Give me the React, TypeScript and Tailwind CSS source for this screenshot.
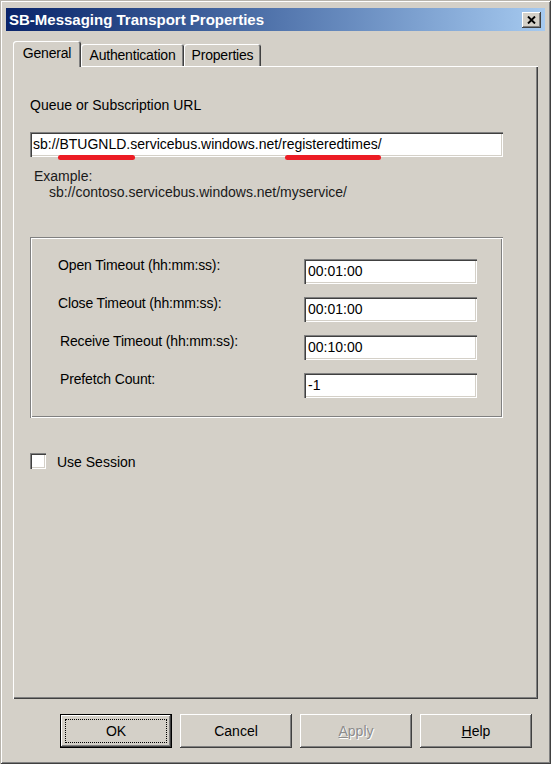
import React from "react";

const font = "font-['Liberation_Sans',Arial,sans-serif]";
const sunken =
  "bg-white shadow-[inset_1px_1px_0_#808080,inset_2px_2px_0_#404040,inset_-1px_-1px_0_#ffffff,inset_-2px_-2px_0_#d4d0c8]";
const raised =
  "bg-[#d4d0c8] shadow-[inset_-1px_-1px_0_#404040,inset_1px_1px_0_#ffffff,inset_-2px_-2px_0_#808080]";

function Field({ value, className = "" }: { value: string; className?: string }) {
  return (
    <div className={`${sunken} h-[25px] flex items-center pl-[4px] text-[14px] text-black ${className}`}>
      {value}
    </div>
  );
}

function Tab({ label, selected, w }: { label: string; selected?: boolean; w: string }) {
  return (
    <div
      className={
        selected
          ? `relative z-10 -mb-px h-[26px] ${w} flex justify-center pt-[4px] rounded-t-[3px] bg-[#d4d0c8] shadow-[inset_1px_1px_0_#ffffff,inset_-1px_0_0_#404040,inset_-2px_0_0_#808080] text-[14px] leading-[16px]`
          : `h-[22px] ${w} flex justify-center pt-[3px] rounded-t-[3px] bg-[#d4d0c8] shadow-[inset_1px_1px_0_#ffffff,inset_-1px_0_0_#404040,inset_-2px_0_0_#808080] text-[14px] leading-[16px]`
      }
    >
      <span className="text-black tracking-[-0.2px]">{label}</span>
    </div>
  );
}

function Row({ label, value, shift }: { label: string; value: string; shift?: boolean }) {
  return (
    <div className="flex h-[25px] items-start">
      <div
        className={`w-[246px] mt-[-2px] text-[14px] leading-[16px] tracking-[-0.15px] text-black ${shift ? "pl-[2px]" : ""}`}
      >
        {label}
      </div>
      <Field value={value} className="w-[173px]" />
    </div>
  );
}

export default function App() {
  return (
    <div className={`${font} w-[554px] h-[767px] bg-white`}>
      <div className="w-[551px] h-[764px] bg-[#d4d0c8] shadow-[inset_1px_1px_0_#b8b4ac,inset_-1px_-1px_0_#404040,inset_2px_2px_0_#ffffff,inset_-2px_-2px_0_#808080] pt-[8px] px-[6px] flex flex-col">
        {/* Title bar */}
        <div className="h-[23px] bg-gradient-to-r from-[#0a246a] to-[#a6caf0] flex items-center justify-between pl-[3px] pr-[4px]">
          <span className="text-white font-bold text-[15px] leading-[18px]">
            SB-Messaging Transport Properties
          </span>
          <div className={`${raised} w-[19px] h-[16px] flex items-center justify-center`}>
            <svg width="9" height="8" viewBox="0 0 9 8">
              <path d="M1 0.5 L8 7.5 M8 0.5 L1 7.5" stroke="#000" strokeWidth="1.9" />
            </svg>
          </div>
        </div>

        {/* Body */}
        <div className="px-[7px] flex flex-col">
          {/* Tabs */}
          <div className="mt-[10px] h-[25px] flex items-end">
            <Tab label="General" selected w="w-[68px]" />
            <Tab label="Authentication" w="w-[103px]" />
            <Tab label="Properties" w="w-[77px]" />
          </div>

          {/* Panel */}
          <div className="h-[633px] bg-[#d4d0c8] shadow-[inset_1px_1px_0_#ffffff,inset_-1px_-1px_0_#404040,inset_-2px_-2px_0_#808080] pl-[17px] flex flex-col">
            <div className="mt-[31px] text-[14px] leading-[16px] text-black">Queue or Subscription URL</div>

            <div className="relative mt-[19px] w-[473px]">
              <div className={`${sunken} h-[25px] flex items-center pl-[3px] text-[14px] text-black`}>
                sb://BTUGNLD.servicebus.windows.net/registeredtimes/
              </div>
              <div className="absolute left-[28px] top-[23px] w-[77px] h-[5px] rounded-full bg-[#ec1c24]" />
              <div className="absolute left-[255px] top-[23px] w-[96px] h-[5px] rounded-full bg-[#ec1c24]" />
            </div>

            <div className="mt-[11px] pl-[4px] text-[14px] leading-[16px] text-[#1a1a1a]">Example:</div>
            <div className="pl-[19px] text-[14px] leading-[16px] text-[#1a1a1a]">
              sb://contoso.servicebus.windows.net/myservice/
            </div>

            {/* Group box */}
            <div className="mt-[37px] w-[473px] h-[181px] shadow-[inset_1px_1px_0_#808080,inset_-1px_-1px_0_#ffffff,inset_2px_2px_0_#ffffff,inset_-2px_-2px_0_#808080] pt-[22px] pl-[28px] flex flex-col gap-[13px]">
              <Row label="Open Timeout (hh:mm:ss):" value="00:01:00" />
              <Row label="Close Timeout (hh:mm:ss):" value="00:01:00" />
              <Row label="Receive Timeout (hh:mm:ss):" value="00:10:00" shift />
              <Row label="Prefetch Count:" value="-1" shift />
            </div>

            {/* Checkbox */}
            <div className="mt-[33px] flex items-center">
              <div className={`${sunken} w-[16px] h-[16px]`} />
              <span className="ml-[11px] mt-[3px] text-[14px] leading-[16px] text-black">Use Session</span>
            </div>
          </div>

          {/* Buttons */}
          <div className="mt-[15px] flex justify-end gap-[8px] pr-[6px]">
            <div className="w-[112px] h-[34px] border border-black">
              <div
                className={`${raised} w-full h-full flex items-center justify-center text-[14px] text-black outline-1 outline-dotted outline-black outline-offset-[-5px]`}
              >
                OK
              </div>
            </div>
            <div className={`${raised} w-[112px] h-[34px] flex items-center justify-center text-[14px] text-black`}>
              Cancel
            </div>
            <div
              className={`${raised} w-[112px] h-[34px] flex items-center justify-center text-[14px] text-[#8c8c8c] [text-shadow:1px_1px_0_#ffffff]`}
            >
              <span>
                <span className="underline">A</span>pply
              </span>
            </div>
            <div className={`${raised} w-[112px] h-[34px] flex items-center justify-center text-[14px] text-black`}>
              <span>
                <span className="underline">H</span>elp
              </span>
            </div>
          </div>
        </div>
      </div>
    </div>
  );
}
